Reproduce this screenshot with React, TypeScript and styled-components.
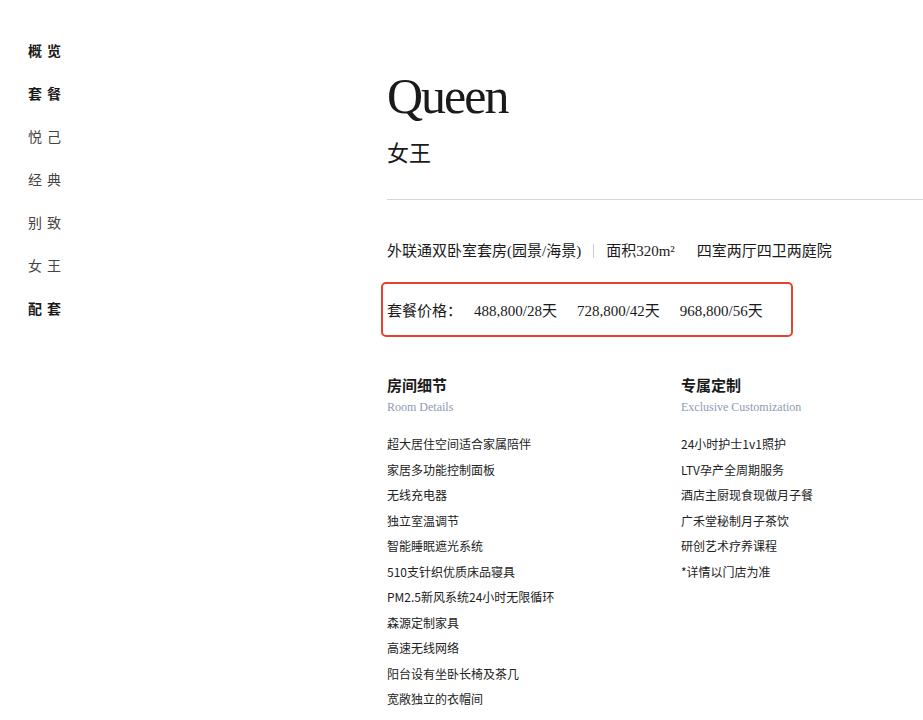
import * as React from 'react'
import styled, { createGlobalStyle } from 'styled-components'

const GlobalStyle = createGlobalStyle`
  body {
    margin: 0;
    background: #fff;
    color: #1a1a1a;
    font-family: "Liberation Serif", "Noto Sans CJK SC", serif;
  }
`

const Page = styled.div`
  display: flex;
  width: 923px;
  height: 720px;
  overflow: hidden;
`

const Sidebar = styled.nav`
  width: 387px;
  flex-shrink: 0;
  padding: 40px 0 0 28px;
  box-sizing: border-box;
  display: flex;
  flex-direction: column;
  gap: 23px;
`

const NavItem = styled.div<{ $bold?: boolean }>`
  font-family: "Noto Sans CJK SC", sans-serif;
  font-size: 14px;
  line-height: 20px;
  letter-spacing: 5px;
  font-weight: ${(p) => (p.$bold ? 700 : 400)};
  color: ${(p) => (p.$bold ? '#1a1a1a' : '#444')};
`

const Main = styled.main`
  flex: 1;
  padding-top: 68px;
`

const Title = styled.h1`
  margin: 0;
  font-family: "Liberation Serif", serif;
  font-weight: 400;
  font-size: 50px;
  line-height: 56px;
  letter-spacing: -2px;
`

const Subtitle = styled.div`
  margin-top: 12px;
  font-family: "Noto Sans CJK SC", sans-serif;
  font-size: 22px;
  line-height: 30px;
`

const Divider = styled.hr`
  margin: 33px 0 0;
  border: none;
  border-top: 1px solid #d6d6d6;
`

const InfoRow = styled.div`
  margin-top: 40px;
  display: flex;
  align-items: center;
  font-size: 15px;
  line-height: 22px;
`

const Sep = styled.span`
  width: 1px;
  height: 14px;
  background: #ccc;
  margin: 0 12px;
`

const PriceBox = styled.div`
  margin: 20px 0 0 -6px;
  width: 412px;
  height: 55px;
  box-sizing: border-box;
  border: 2px solid #e5432d;
  border-radius: 5px;
  padding-left: 4px;
  display: flex;
  align-items: center;
  gap: 20px;
  font-size: 15px;
`

const Columns = styled.div`
  margin-top: 37px;
  display: grid;
  grid-template-columns: 294px 1fr;
`

const ColTitle = styled.div`
  font-family: "Noto Sans CJK SC", sans-serif;
  font-weight: 700;
  font-size: 15px;
  line-height: 22px;
`

const ColSub = styled.div`
  margin-top: 3px;
  font-size: 12px;
  color: #8e9ab3;
  line-height: 16px;
`

const List = styled.ul`
  list-style: none;
  margin: 20px 0 0;
  padding: 0;
  display: flex;
  flex-direction: column;
  gap: 7.5px;
`

const Item = styled.li`
  font-family: "Noto Sans CJK SC", sans-serif;
  font-size: 12px;
  line-height: 18px;
  color: #222;
`

const nav: [string, boolean][] = [
  ['概览', true], ['套餐', true], ['悦己', false], ['经典', false],
  ['别致', false], ['女王', false], ['配套', true],
]

const room = [
  '超大居住空间适合家属陪伴', '家居多功能控制面板', '无线充电器', '独立室温调节',
  '智能睡眠遮光系统', '510支针织优质床品寝具', 'PM2.5新风系统24小时无限循环',
  '森源定制家具', '高速无线网络', '阳台设有坐卧长椅及茶几', '宽敞独立的衣帽间',
]

const custom = [
  '24小时护士1v1照护', 'LTV孕产全周期服务', '酒店主厨现食现做月子餐',
  '广禾堂秘制月子茶饮', '研创艺术疗养课程', '*详情以门店为准',
]

export default function App(): JSX.Element {
  return (
    <Page>
      <GlobalStyle />
      <Sidebar>
        {nav.map(([t, b]) => (
          <NavItem key={t} $bold={b}>{t}</NavItem>
        ))}
      </Sidebar>
      <Main>
        <Title>Queen</Title>
        <Subtitle>女王</Subtitle>
        <Divider />
        <InfoRow>
          <span>外联通双卧室套房(园景/海景)</span>
          <Sep />
          <span>面积320m²</span>
          <span style={{ marginLeft: 22 }}>四室两厅四卫两庭院</span>
        </InfoRow>
        <PriceBox>
          <span style={{ marginRight: -8 }}>套餐价格：</span>
          <span>488,800/28天</span>
          <span>728,800/42天</span>
          <span>968,800/56天</span>
        </PriceBox>
        <Columns>
          <div>
            <ColTitle>房间细节</ColTitle>
            <ColSub>Room Details</ColSub>
            <List>{room.map((r) => <Item key={r}>{r}</Item>)}</List>
          </div>
          <div>
            <ColTitle>专属定制</ColTitle>
            <ColSub>Exclusive Customization</ColSub>
            <List>{custom.map((r) => <Item key={r}>{r}</Item>)}</List>
          </div>
        </Columns>
      </Main>
    </Page>
  )
}
